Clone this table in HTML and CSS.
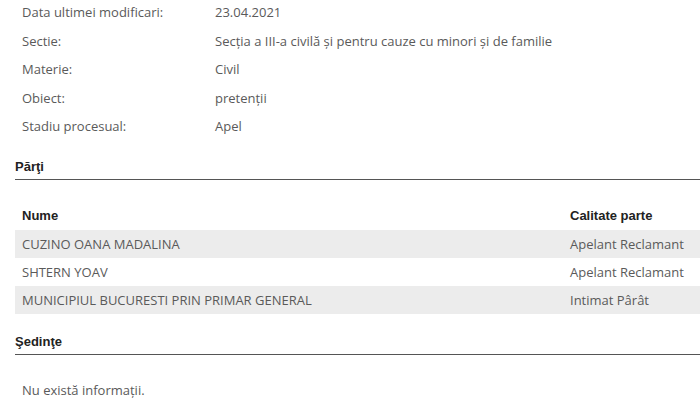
FILE: index.html
```html
<!DOCTYPE html>
<html lang="ro">

<head>
    <meta charset="UTF-8">
    <meta name="viewport" content="width=device-width, initial-scale=1.0">
    <title>Dosar</title>
    <link rel="stylesheet" href="styles.css">
</head>

<body>
    <div class="container">
        <div class="details">
            <div class="detail-row"><span class="label">Data ultimei modificari:</span><span class="value">23.04.2021</span></div>
            <div class="detail-row"><span class="label">Sectie:</span><span class="value">Secţia a III-a civilă şi pentru cauze cu minori şi de familie</span></div>
            <div class="detail-row"><span class="label">Materie:</span><span class="value">Civil</span></div>
            <div class="detail-row"><span class="label">Obiect:</span><span class="value">pretenţii</span></div>
            <div class="detail-row"><span class="label">Stadiu procesual:</span><span class="value">Apel</span></div>
        </div>

        <h3 class="section-title parti-title">Părţi</h3>
        <div class="parti">
            <div class="parti-head">
                <span class="col-name">Nume</span>
                <span class="col-role">Calitate parte</span>
            </div>
            <div class="parti-row shaded">
                <span class="col-name">CUZINO OANA MADALINA</span>
                <span class="col-role">Apelant Reclamant</span>
            </div>
            <div class="parti-row">
                <span class="col-name">SHTERN YOAV</span>
                <span class="col-role">Apelant Reclamant</span>
            </div>
            <div class="parti-row shaded">
                <span class="col-name">MUNICIPIUL BUCURESTI PRIN PRIMAR GENERAL</span>
                <span class="col-role">Intimat Pârât</span>
            </div>
        </div>

        <h3 class="section-title sedinte-title">Şedinţe</h3>
        <div class="empty">Nu există informaţii.</div>
    </div>
</body>

</html>
```

FILE: styles.css
```css
* {
    padding: 0;
    margin: 0;
    box-sizing: border-box;
}

body {
    width: 700px;
    height: 418px;
    overflow: hidden;
    background-color: #fff;
    font-family: "Open Sans", "Liberation Sans", sans-serif;
    font-size: 13px;
    color: #5a5a5a;
}

.container {
    padding-left: 15px;
}

.details {
    margin-top: -2px;
}

.detail-row {
    display: flex;
    height: 28.5px;
    align-items: center;
}

.detail-row .label {
    width: 200px;
    padding-left: 7px;
}

.section-title {
    font-family: "Liberation Sans", Arial, sans-serif;
    font-size: 13px;
    font-weight: bold;
    color: #222;
    border-bottom: 1px solid #555;
    height: 21px;
    line-height: 16px;
}

.parti-title {
    margin-top: 18px;
}

.parti {
    margin-top: 22px;
}

.parti-head {
    display: flex;
    height: 28px;
    align-items: center;
    font-family: "Liberation Sans", Arial, sans-serif;
    font-weight: bold;
    color: #222;
}

.parti-row {
    display: flex;
    height: 28px;
    align-items: center;
}

.parti-row.shaded {
    background-color: #ececec;
}

.col-name {
    width: 548px;
    padding-left: 7px;
}

.col-role {
    padding-left: 7px;
}

.sedinte-title {
    margin-top: 20px;
}

.empty {
    padding-left: 7px;
    margin-top: 26px;
}
```
